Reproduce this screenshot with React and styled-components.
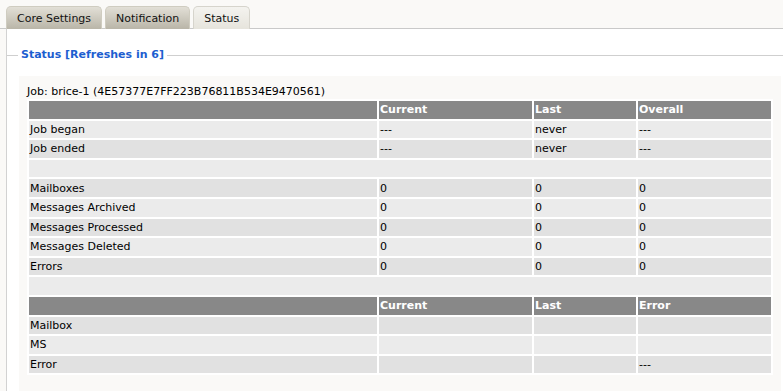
import React from 'react';
import styled, { createGlobalStyle } from 'styled-components';

const Global = createGlobalStyle`
  html, body {
    margin: 0;
    padding: 0;
    background: #faf9f7;
    font-family: "DejaVu Sans", Verdana, sans-serif;
    font-size: 11px;
    color: #000;
  }
`;

const TabBar = styled.div`
  display: flex;
  gap: 3px;
  height: 29px;
  padding: 6px 0 0 6px;
  box-sizing: border-box;
  border-bottom: 1px solid #c9c9c9;
`;

const Tab = styled.div`
  box-sizing: border-box;
  height: 23px;
  padding: 0 10px;
  line-height: 23px;
  border: 1px solid ${p => (p.$active ? '#d6d4cc' : '#cfccc0')};
  border-bottom: none;
  border-radius: 5px 5px 0 0;
  color: #111;
  background: ${p =>
    p.$active
      ? 'linear-gradient(#f4f3ef, #e6e4dc)'
      : 'linear-gradient(#e2dfd6, #b9b5a8)'};
`;

const Panel = styled.div`
  margin-left: 6px;
  border-left: 1px solid #d2d2d2;
  background: #fff;
  padding-top: 19px;
  min-height: 361px;
  box-sizing: border-box;
`;

const Box = styled.fieldset`
  margin: 0;
  border: none;
  border-top: 1px solid #cfcfcf;
  padding: 14px 2px 0 12px;
`;

const Legend = styled.legend`
  margin-left: -1px;
  padding: 0 3px;
  line-height: 14px;
  font-weight: bold;
  color: #1d5ed0;
`;

const Inner = styled.div`
  background: #faf9f7;
  padding: 9px 8px 20px 8px;
`;

const JobLine = styled.div`
  line-height: 14px;
`;

const Grid = styled.table`
  width: 100%;
  border-collapse: separate;
  border-spacing: 2px;
  background: #fff;
  table-layout: fixed;
`;

const Head = styled.td`
  background: #888888;
  color: #fff;
  font-weight: bold;
  height: 17.6px;
  padding: 0 1px;
  line-height: 17px;
`;

const Cell = styled.td`
  background: ${p => (p.$dark ? '#e1e1e1' : '#ebebeb')};
  height: 17.6px;
  padding: 0 1px;
  line-height: 17px;
  white-space: nowrap;
`;

const statRows = [
  ['Job began', '---', 'never', '---'],
  ['Job ended', '---', 'never', '---'],
  null,
  ['Mailboxes', '0', '0', '0'],
  ['Messages Archived', '0', '0', '0'],
  ['Messages Processed', '0', '0', '0'],
  ['Messages Deleted', '0', '0', '0'],
  ['Errors', '0', '0', '0'],
  null,
];

const lastRows = [
  ['Mailbox', '', '', ''],
  ['MS', '', '', ''],
  ['Error', '', '', '---'],
];

function Row({ cells, dark }) {
  if (!cells) {
    return (
      <tr>
        <Cell colSpan={4} $dark={dark} />
      </tr>
    );
  }
  return (
    <tr>
      {cells.map((c, i) => (
        <Cell key={i} $dark={dark}>{c}</Cell>
      ))}
    </tr>
  );
}

function HeadRow({ cols }) {
  return (
    <tr>
      <Head />
      {cols.map(c => (
        <Head key={c}>{c}</Head>
      ))}
    </tr>
  );
}

export default function App() {
  return (
    <>
      <Global />
      <TabBar>
        <Tab>Core Settings</Tab>
        <Tab>Notification</Tab>
        <Tab $active>Status</Tab>
      </TabBar>
      <Panel>
        <Box>
          <Legend>Status [Refreshes in 6]</Legend>
          <Inner>
            <JobLine>Job: brice-1 (4E57377E7FF223B76811B534E9470561)</JobLine>
            <Grid>
              <colgroup>
                <col style={{ width: 348 }} />
                <col style={{ width: 153 }} />
                <col style={{ width: 102 }} />
                <col />
              </colgroup>
              <tbody>
                <HeadRow cols={['Current', 'Last', 'Overall']} />
                {statRows.map((r, i) => (
                  <Row key={i} cells={r} dark={i % 2 === 1} />
                ))}
                <HeadRow cols={['Current', 'Last', 'Error']} />
                {lastRows.map((r, i) => (
                  <Row key={'l' + i} cells={r} dark={i % 2 === 0} />
                ))}
              </tbody>
            </Grid>
          </Inner>
        </Box>
      </Panel>
    </>
  );
}
